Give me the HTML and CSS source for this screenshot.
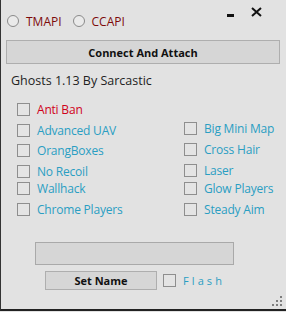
FILE: index.html
```html
<!DOCTYPE html>
<html lang="en">
<head>
  <meta charset="UTF-8" />
  <title>Ghosts 1.13</title>
  <link rel="stylesheet" href="styles.css">
</head>
<body>
  <div class="window">
    <div class="topbar">
      <label class="radio"><span class="circle"></span>TMAPI</label>
      <label class="radio"><span class="circle"></span>CCAPI</label>
      <div class="controls">
        <svg class="min" width="8" height="4" viewBox="0 0 8 4"><rect x="0" y="0" width="7" height="3" fill="#111"/></svg>
        <svg class="close" width="11" height="10" viewBox="0 0 11 10"><path d="M1 1 L10 9 M10 1 L1 9" stroke="#111" stroke-width="2"/></svg>
      </div>
    </div>

    <button class="btn connect">Connect And Attach</button>

    <p class="title">Ghosts 1.13 By Sarcastic</p>

    <div class="mods">
      <label class="check red l1"><span class="box"></span>Anti Ban</label>
      <label class="check l2"><span class="box"></span>Advanced UAV</label>
      <label class="check r2"><span class="box"></span>Big Mini Map</label>
      <label class="check l3"><span class="box"></span>OrangBoxes</label>
      <label class="check r3"><span class="box"></span>Cross Hair</label>
      <label class="check l4"><span class="box"></span>No Recoil</label>
      <label class="check r4"><span class="box"></span>Laser</label>
      <label class="check l5"><span class="box"></span>Wallhack</label>
      <label class="check r5"><span class="box"></span>Glow Players</label>
      <label class="check l6"><span class="box"></span>Chrome Players</label>
      <label class="check r6"><span class="box"></span>Steady Aim</label>
    </div>

    <div class="name-input"></div>

    <div class="name-row">
      <button class="btn setname">Set Name</button>
      <label class="check flash"><span class="box"></span>Flash</label>
    </div>

    <div class="grip">
      <i></i><i></i><i></i><i></i><i></i><i></i>
    </div>
  </div>
</body>
</html>
```

FILE: styles.css
```css
* {
  box-sizing: border-box; margin: 0; padding: 0;
}

body {
  background: #e2e2e2;
  font-family: "Open Sans", Arial, sans-serif;
}

.window {
  position: relative;
  width: 286px;
  height: 311px;
  background: #e2e2e2;
  border-left: 1px solid #333;
  border-bottom: 2px solid #222;
  padding: 13px 6px 0 5px;
}

.topbar {
  display: flex;
  align-items: center;
  height: 16px;
}

.radio {
  display: flex;
  align-items: center;
  font-size: 12px;
  color: #7d0a0a;
  margin-right: 10px;
}

.circle {
  width: 12px;
  height: 12px;
  border: 1px solid #8a8a8a;
  border-radius: 50%;
  background: #eaeaea;
  margin: 0 7px 0 1px;
}

.controls {
  margin-left: auto;
  display: flex;
  align-items: flex-start;
  gap: 16px;
  margin-right: 18px;
  align-self: flex-start;
  margin-top: -6px;
}

.controls .min {
  margin-top: 7px;
  margin-left: 1px;
}

.btn {
  display: block;
  background: #d6d6d6;
  border: 1px solid #aeaeae;
  font-family: "Open Sans", Arial, sans-serif;
  font-weight: bold;
  font-size: 11px;
  color: #111;
}

.connect {
  width: 274px;
  height: 24px;
  margin-top: 11px;
}

.title {
  font-size: 12.5px;
  color: #222;
  margin: 8px 0 0 5px;
  height: 16px;
}

.mods {
  display: grid;
  grid-template-columns: 167px 1fr;
  grid-template-rows: 20px 21px 21px 17px 21px 20px;
  margin: 15px 0 0 11px;
}

.check {
  display: flex;
  align-items: center;
  height: 13px;
  font-size: 12px;
  color: #2a9ec2;
  letter-spacing: -0.2px;
}

.check.red {
  color: #d0021b;
}

.box {
  width: 13px;
  height: 13px;
  border: 1px solid #8e8e8e;
  background: #e4e4e4;
  margin-right: 7px;
  flex-shrink: 0;
}

.l1 { grid-column: 1; grid-row: 1; }
.l2 { grid-column: 1; grid-row: 2; margin-top: 1px; }
.r2 { grid-column: 2; grid-row: 2; margin-top: -1px; }
.l3 { grid-column: 1; grid-row: 3; }
.r3 { grid-column: 2; grid-row: 3; margin-top: -1px; }
.l4 { grid-column: 1; grid-row: 4; }
.r4 { grid-column: 2; grid-row: 4; margin-top: -1px; }
.l5 { grid-column: 1; grid-row: 5; }
.r5 { grid-column: 2; grid-row: 5; }
.l6 { grid-column: 1; grid-row: 6; }
.r6 { grid-column: 2; grid-row: 6; }

.name-input {
  width: 199px;
  height: 23px;
  margin: 19px 0 0 29px;
  background: #d6d6d6;
  border: 1px solid #a9a9a9;
}

.name-row {
  display: flex;
  align-items: center;
  margin: 6px 0 0 39px;
}

.setname {
  width: 112px;
  height: 19px;
}

.flash {
  margin-left: 6px;
  font-size: 11px;
  letter-spacing: 3.1px;
}

.grip {
  position: absolute;
  right: 4px;
  bottom: 3px;
  display: grid;
  grid-template-columns: repeat(3, 2px);
  grid-template-rows: repeat(3, 2px);
  gap: 2px;
}

.grip i {
  background: #7d7d7d;
}

.grip i:nth-child(1) { grid-area: 1 / 3; }
.grip i:nth-child(2) { grid-area: 2 / 2; }
.grip i:nth-child(3) { grid-area: 2 / 3; }
.grip i:nth-child(4) { grid-area: 3 / 1; }
.grip i:nth-child(5) { grid-area: 3 / 2; }
.grip i:nth-child(6) { grid-area: 3 / 3; }
```
